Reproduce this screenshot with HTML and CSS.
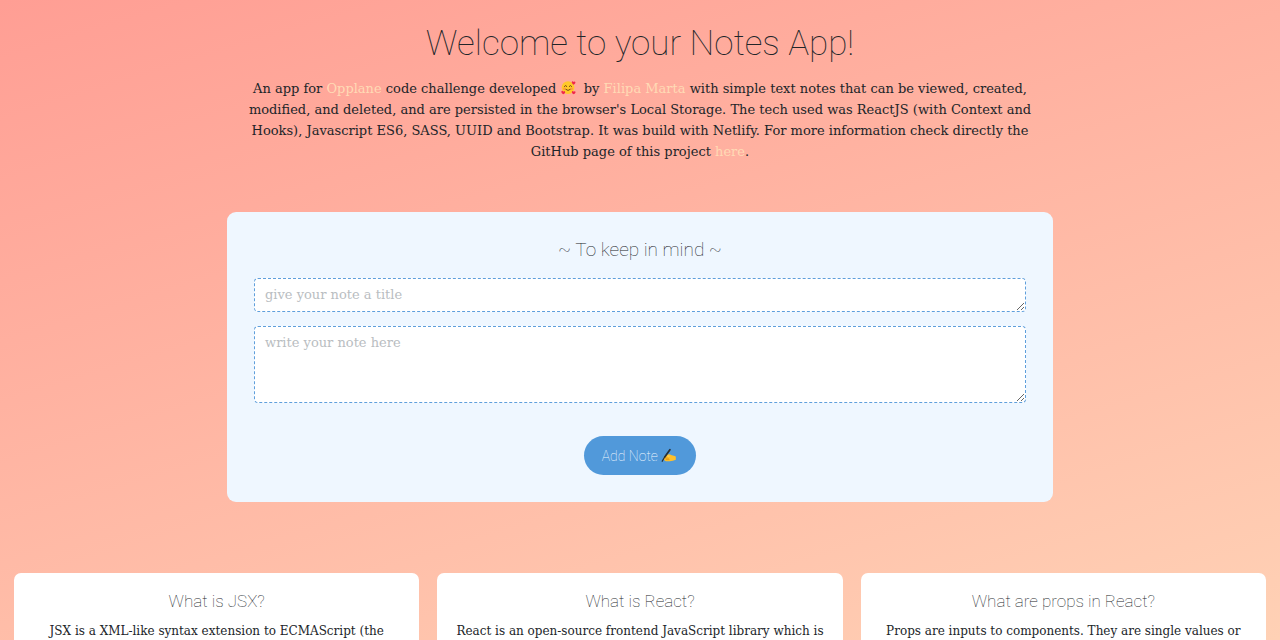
FILE: index.html
```html
<!DOCTYPE html>
<html lang="en">
<head>
<meta charset="utf-8">
<meta name="viewport" content="width=device-width, initial-scale=1">
<title>Notes App</title>
<link rel="stylesheet" href="styles.css">
</head>
<body>
<div class="page">
  <header class="intro">
    <h1 class="intro-title">Welcome to your Notes App!</h1>
    <p class="intro-text">An app for <a href="#opplane">Opplane</a> code challenge developed <svg class="emoji" viewBox="0 0 16 16" aria-label="smiling face with hearts" role="img"><circle cx="7.500" cy="8" r="6.800" fill="#ffc928"/><path d="M3.600 6.800q1.300-2 2.600 0M8.800 6.800q1.300-2 2.600 0M5 10q2.500 2.500 5 0" fill="none" stroke="#6b3b12" stroke-width="1" stroke-linecap="round"/><circle cx="3.500" cy="9.300" r="1.300" fill="#ff9a3c"/><circle cx="11.500" cy="9.300" r="1.300" fill="#ff9a3c"/><g fill="#f0284a"><path d="M13.500 5C11 3.500 11.200 1.500 12.300 1.300q.9 0 1.100.9.800-1 1.700-.3C16 3 15 4.300 13.500 5z"/><path d="M2.500 15.300C0 14 0 11.700 1.200 11.500q1 0 1.300 1 .9-1.200 1.700-.3C5 13.300 4 14.500 2.500 15.300z"/><path d="M13.500 15.300C11.300 14 11.200 11.900 12.300 11.600q1 0 1.200.9 1-1 1.800-.2C16 13.300 15 14.700 13.500 15.300z"/></g></svg>&nbsp; by <a href="#author">Filipa Marta</a> with simple text notes that can be viewed, created,<br>modified, and deleted, and are persisted in the browser's Local Storage. The tech used was ReactJS (with Context and<br>Hooks), Javascript ES6, SASS, UUID and Bootstrap. It was build with Netlify. For more information check directly the<br>GitHub page of this project <a href="#github">here</a>.</p>
  </header>
  <main>
    <form class="note-form">
      <h2 class="form-title">~ To keep in mind ~</h2>
      <textarea class="field field-title" rows="1" aria-label="Note title" placeholder="give your note a title"></textarea>
      <textarea class="field field-body" rows="3" aria-label="Note text" placeholder="write your note here"></textarea>
      <button class="add-button" type="button">Add Note <svg class="emoji" viewBox="0 0 16 16" aria-hidden="true"><path d="M3 9.500Q4 7 6.500 6.800l2.500-.2 2.500 1q2.500.2 4.300 1.400v3.600q-3 1.500-6.500 1.500H5.500q-2-.1-2-1.500Q2.300 11.500 3 9.500z" fill="#ffc02b"/><path d="M4.500 10.800h4M5 12.400h4" stroke="#d88a12" stroke-width=".7"/><path d="M9.500 1.800L4 9.500" stroke="#25303a" stroke-width="1.900" stroke-linecap="round"/><path d="M4 9.500L1 14.500" stroke="#25303a" stroke-width="1.200"/><path d="M6.500 8.300q2-1.500 3 .5l-2 1.500z" fill="#ffd04d"/></svg></button>
    </form>
    <section class="cards">
      <article class="card"><h3 class="card-title">What is JSX?</h3><p class="card-text">JSX is a XML-like syntax extension to ECMAScript (the</p></article>
      <article class="card"><h3 class="card-title">What is React?</h3><p class="card-text">React is an open-source frontend JavaScript library which is</p></article>
      <article class="card"><h3 class="card-title">What are props in React?</h3><p class="card-text">Props are inputs to components. They are single values or</p></article>
    </section>
  </main>
</div>
</body>
</html>
```

FILE: styles.css
```css
* { box-sizing: border-box; }
body {
  margin: 0;
  color: #212529;
  font-family: "Roboto Slab", "DejaVu Serif", serif;
}
.page {
  height: 100vh;
  overflow: hidden;
  display: flex;
  flex-direction: column;
  background: linear-gradient(163deg, #ff9e94 0%, #ffd1b5 100%);
}
h1, h2, h3 {
  margin: 0;
  font-family: Roboto, sans-serif;
  font-weight: 100;
  text-align: center;
}
.intro { padding-top: 22px; text-align: center; }
.intro-title { font-size: 35px; line-height: 43px; }
.intro-text { margin: 13px 0 0; font-size: 13px; line-height: 21px; white-space: nowrap; }
.intro-text a { color: #ffdab5; text-decoration: none; }
.emoji { width: 15px; height: 15px; vertical-align: -2px; }
main { flex: 1; display: flex; flex-direction: column; }
.note-form {
  width: 100%;
  max-width: 826px;
  margin: 50px auto 0;
  padding: 26px 27px 27px;
  display: flex;
  flex-direction: column;
  background: #eff7ff;
  border-radius: 9px;
}
.form-title { font-size: 19px; line-height: 23px; }
.field {
  width: 100%;
  padding: 5px 10px;
  border: 1px dashed #5f9fdc;
  border-radius: 4px;
  background: #fff;
  color: #212529;
  font-family: inherit;
  font-size: 13px;
  font-weight: 300;
  line-height: 21px;
  resize: vertical;
  overflow: hidden;
}
.field::placeholder { color: #b9bdc1; opacity: 1; }
.field-title { height: 34px; margin-top: 17px; }
.field-body { height: 77px; margin-top: 14px; }
.add-button {
  align-self: center;
  margin-top: 33px;
  height: 39px;
  padding: 0 20px 0 18px;
  border: 0;
  border-radius: 20px;
  background: #5199da;
  color: #eff7ff;
  font-family: Roboto, sans-serif;
  font-size: 14px;
  font-weight: 100;
}
.cards {
  flex: 1;
  display: grid;
  grid-template-columns: repeat(3, minmax(0, 1fr));
  gap: 18px;
  margin-top: 71px;
  padding: 0 14px;
}
.card { padding: 17px 16px 0; border-radius: 7px 7px 0 0; background: #fff; text-align: center; }
.card-title { font-size: 17px; line-height: 22px; }
.card-text { margin: 10px 0 0; font-size: 12px; line-height: 19px; white-space: nowrap; }
```
